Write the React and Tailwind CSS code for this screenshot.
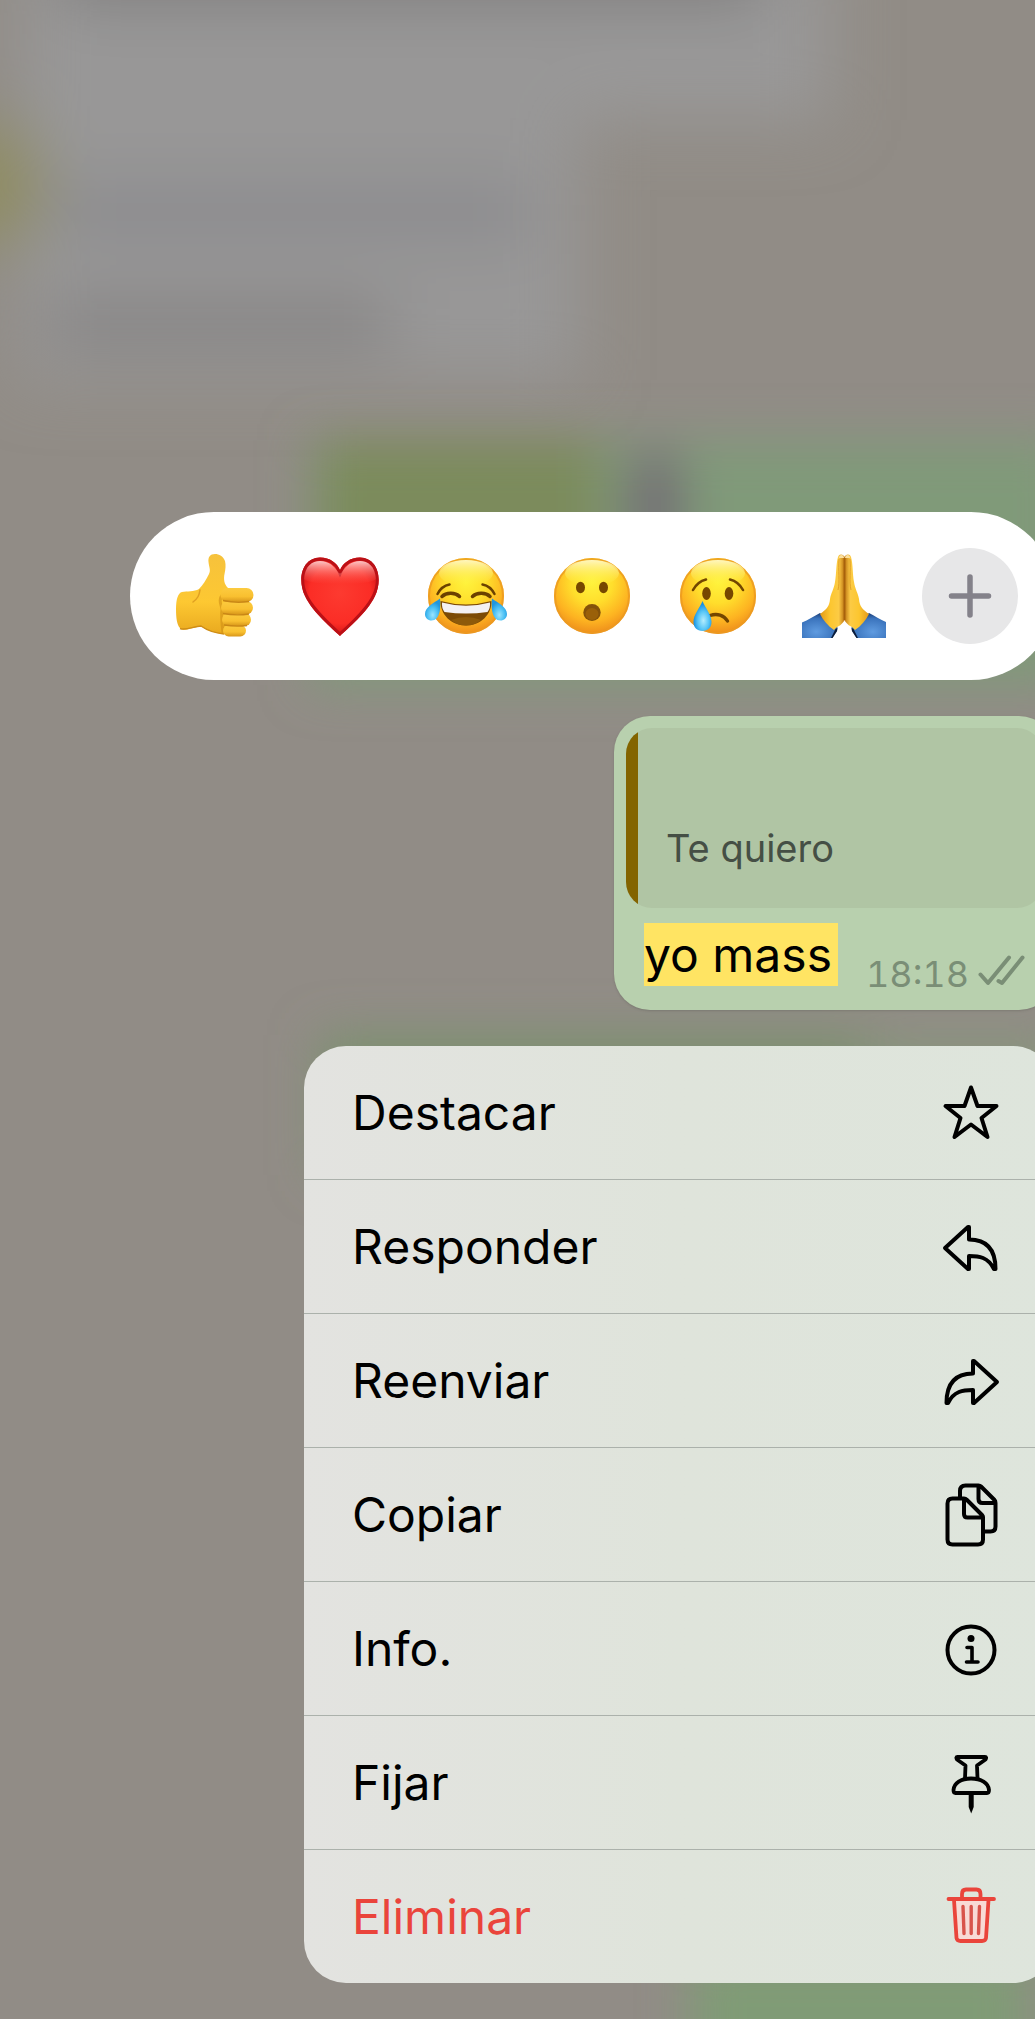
import React from 'react';

function Backdrop() {
  return (
    <svg
      aria-hidden="true"
      className="absolute inset-0 w-full h-full"
      viewBox="0 0 1035 2019"
      preserveAspectRatio="xMidYMin slice"
    >
      <defs>
        <filter id="soft" x="-60%" y="-60%" width="220%" height="220%">
          <feGaussianBlur stdDeviation="32" />
        </filter>
        <filter id="tight" x="-60%" y="-60%" width="220%" height="220%">
          <feGaussianBlur stdDeviation="24" />
        </filter>
      </defs>
      <g filter="url(#soft)">
        <rect x="20" y="-60" width="810" height="180" fill="#999898" />
        <rect x="20" y="60" width="560" height="320" fill="#989797" />
        <rect x="60" y="-60" width="700" height="64" fill="#7f7e7e" />
        <rect x="60" y="190" width="470" height="44" fill="#87878b" />
        <rect x="50" y="300" width="340" height="46" fill="#838181" />
        <ellipse cx="-10" cy="185" rx="55" ry="65" fill="#8f8c60" />
      </g>
      <g filter="url(#tight)">
        <rect x="310" y="440" width="760" height="245" fill="#809a79" />
        <rect x="320" y="440" width="280" height="160" fill="#7b8b5c" />
        <rect x="625" y="450" width="60" height="110" rx="30" fill="#746f74" />
        <rect x="320" y="1035" width="560" height="140" fill="#7b916e" />
        <rect x="860" y="1040" width="200" height="140" fill="#87957c" />
        <rect x="690" y="1950" width="340" height="140" fill="#809b76" />
      </g>
    </svg>
  );
}

function ThumbsUp() {
  return (
    <svg viewBox="0 0 84 84" className="w-[84px] h-[84px]" aria-hidden="true">
      <defs>
        <linearGradient id="thumbSkin" x1="0" y1="0" x2="0" y2="1">
          <stop offset="0" stopColor="#f6c23c" />
          <stop offset="0.6" stopColor="#fdc832" />
          <stop offset="1" stopColor="#e9a91f" />
        </linearGradient>
        <linearGradient id="fingerSkin" x1="0" y1="0" x2="0" y2="1">
          <stop offset="0" stopColor="#fccb40" />
          <stop offset="0.6" stopColor="#f9c030" />
          <stop offset="1" stopColor="#d8961a" />
        </linearGradient>
      </defs>
      <path
        d="M43 0C38 0 36 3 36.500 8C37 13 39 16 37 20C34 26 31 31 27 35C22 38 15 37 10 38C6 39 4 45 4 55C4 64 5 71 8 74C10 76.500 14 76 19 74.500L29 72C33 75 40 79 52 80L60 60L56 34C52 30 51.500 25 52.500 20C53.500 15 54 11 53 7C51.500 2.500 47 0 43 0Z"
        fill="url(#thumbSkin)"
      />
      <path d="M28 36C27 42 26 44 21 48" fill="none" stroke="#e0a022" strokeWidth="1.500" strokeLinecap="round" />
      <path d="M8 74.500C14 77 22 72 29 72C36 77 42 79 52 80" fill="none" stroke="#cf8d16" strokeWidth="1.500" />
      <path d="M51 40C46 46 49 50 50 55C49 62 50 70 51 79" fill="none" stroke="#cf8d16" strokeWidth="3" opacity="0.600" />
      <rect x="51" y="71" width="23" height="11.500" rx="5.700" fill="url(#fingerSkin)" />
      <rect x="50" y="59.500" width="29" height="12.500" rx="6.200" fill="url(#fingerSkin)" />
      <rect x="49" y="47" width="32" height="13.500" rx="6.700" fill="url(#fingerSkin)" />
      <rect x="48.500" y="34" width="33" height="14" rx="7" fill="url(#fingerSkin)" />
      <path d="M51 46.500Q64 49.500 77 47.500M51 59.500Q64 62 77 60M52 71Q64 73 75 71.500" fill="none" stroke="#c98716" strokeWidth="1.300" />
    </svg>
  );
}

function Heart() {
  const shape =
    'M42 82C35 75 15 59 7 42C-1 25 4 4 22 3.500C32 3.500 39 9 42 16C45 9 52 3.500 62 3.500C80 4 85 25 77 42C69 59 49 75 42 82Z';
  return (
    <svg viewBox="0 0 84 84" className="w-[84px] h-[84px]" aria-hidden="true">
      <defs>
        <radialGradient id="heartFill" cx="0.5" cy="0.45" r="0.6">
          <stop offset="0" stopColor="#fd3a30" />
          <stop offset="0.65" stopColor="#fb2d26" />
          <stop offset="0.85" stopColor="#dd1a1a" />
          <stop offset="1" stopColor="#a50b10" />
        </radialGradient>
        <linearGradient id="heartShine" x1="0" y1="0" x2="0" y2="1">
          <stop offset="0" stopColor="#ffd9d9" stopOpacity="0.9" />
          <stop offset="1" stopColor="#ff5a50" stopOpacity="0" />
        </linearGradient>
        <clipPath id="heartClip">
          <path d={shape} />
        </clipPath>
      </defs>
      <path d={shape} fill="url(#heartFill)" />
      <g clipPath="url(#heartClip)">
        <path d={shape} fill="none" stroke="#bb1016" strokeWidth="6" />
      </g>
      <path d="M6 25C7 12 14 7 22 7C31 7 36 12 40 18Q42 21 44 18C48 12 53 7 62 7C70 7 77 12 78 25C72 32 12 32 6 25Z" fill="url(#heartShine)" />
    </svg>
  );
}

function FaceBase({ id }) {
  return (
    <>
      <defs>
        <radialGradient id={id + 'Base'} cx="0.5" cy="0.32" r="0.68">
          <stop offset="0" stopColor="#fff33c" />
          <stop offset="0.4" stopColor="#ffde2c" />
          <stop offset="0.75" stopColor="#fdb321" />
          <stop offset="1" stopColor="#ee8d1b" />
        </radialGradient>
        <linearGradient id={id + 'Shine'} x1="0" y1="0" x2="0" y2="1">
          <stop offset="0" stopColor="#fff6c0" />
          <stop offset="1" stopColor="#fff23e" stopOpacity="0" />
        </linearGradient>
      </defs>
      <circle cx="42" cy="42" r="38" fill={'url(#' + id + 'Base)'} />
      <circle cx="42" cy="42" r="37" fill="none" stroke="#eb9a20" strokeWidth="2" opacity="0.800" />
      <ellipse cx="42" cy="19" rx="27" ry="13" fill={'url(#' + id + 'Shine)'} />
    </>
  );
}

function Joy() {
  return (
    <svg viewBox="0 0 84 84" className="w-[84px] h-[84px]" aria-hidden="true">
      <defs>
        <radialGradient id="joyTear" cx="0.5" cy="0.75" r="0.6">
          <stop offset="0" stopColor="#9be4fd" />
          <stop offset="0.6" stopColor="#46bdf3" />
          <stop offset="1" stopColor="#2196dd" />
        </radialGradient>
      </defs>
      <FaceBase id="joy" />
      <g fill="none" stroke="#6b4100" strokeLinecap="round">
        <path d="M13.500 40C16 35 20 31.500 25.500 30.500M70.500 40C68 35 64 31.500 58.500 30.500" strokeWidth="2.500" />
        <path d="M18 42.500C22 38.500 31 38 35.500 42.500M48.500 42.500C53 38 62 38.500 66 42.500" strokeWidth="3.500" />
      </g>
      <path d="M16.500 47Q42 54 67.500 47C68 60 57 71.500 42 71.500C27 71.500 16 60 16.500 47Z" fill="#7c4a05" />
      <path d="M18 48.500Q42 55 66 48.500Q66.500 54 63.500 58Q42 61 20.500 58Q17.500 54 18 48.500Z" fill="#f3f1f4" />
      <path d="M27 66Q42 60 57 66Q51 71.500 42 71.500Q33 71.500 27 66Z" fill="#8d5a0a" />
      <path d="M16 44.500C10 49 1 53 1 60C1 64 4 66.500 7.500 66.500C16 66.500 17 54 16 44.500Z" fill="url(#joyTear)" />
      <path d="M68 44.500C74 49 83 53 83 60C83 64 80 66.500 76.500 66.500C68 66.500 67 54 68 44.500Z" fill="url(#joyTear)" />
    </svg>
  );
}

function Surprised() {
  return (
    <svg viewBox="0 0 84 84" className="w-[84px] h-[84px]" aria-hidden="true">
      <FaceBase id="wow" />
      <ellipse cx="30.500" cy="33.500" rx="4.500" ry="5.700" fill="#764800" />
      <ellipse cx="53.500" cy="33.500" rx="4.500" ry="5.700" fill="#764800" />
      <ellipse cx="42" cy="58.500" rx="8.700" ry="8.500" fill="#84520a" />
      <ellipse cx="42" cy="60" rx="6.500" ry="6" fill="#9a6009" />
    </svg>
  );
}

function Crying() {
  return (
    <svg viewBox="0 0 84 84" className="w-[84px] h-[84px]" aria-hidden="true">
      <defs>
        <radialGradient id="cryTear" cx="0.55" cy="0.65" r="0.55">
          <stop offset="0" stopColor="#b4ecfd" />
          <stop offset="0.55" stopColor="#58c6f7" />
          <stop offset="1" stopColor="#168fe0" />
        </radialGradient>
      </defs>
      <FaceBase id="cry" />
      <g fill="none" stroke="#734600" strokeLinecap="round">
        <path d="M17 36C20 30.500 24 27 30 25.500M67 36C64 30.500 60 27 54 25.500" strokeWidth="2.600" />
        <path d="M34 61.500C41 59 48 61 51.500 67" strokeWidth="3.400" />
      </g>
      <ellipse cx="30.500" cy="39.500" rx="4.300" ry="6.500" fill="#764800" />
      <ellipse cx="53" cy="39.500" rx="4.300" ry="6.500" fill="#764800" />
      <path d="M26.500 47C24 54 17.500 60 17.500 68C17.500 73.500 21 77 26.500 77C32 77 35.500 73.500 35.500 68C35.500 60 29 54 26.500 47Z" fill="url(#cryTear)" />
    </svg>
  );
}

function Praying() {
  return (
    <svg viewBox="0 0 84 84" className="w-[84px] h-[84px]" aria-hidden="true">
      <defs>
        <linearGradient id="handSkin" x1="0" y1="0" x2="1" y2="0">
          <stop offset="0" stopColor="#e2991a" />
          <stop offset="0.4" stopColor="#fcc62f" />
          <stop offset="0.75" stopColor="#fccb45" />
          <stop offset="1" stopColor="#b96f10" />
        </linearGradient>
        <radialGradient id="sleeve" cx="0.4" cy="0.75" r="0.75">
          <stop offset="0" stopColor="#5f9be0" />
          <stop offset="0.7" stopColor="#3b74bd" />
          <stop offset="1" stopColor="#1c3f78" />
        </radialGradient>
        <g id="prayHalf">
          <path d="M0 68.500C6 66 12 62 18 59L35.500 73L35 77L30.500 84H0Z" fill="url(#sleeve)" />
          <path d="M35.500 74L35 77L30.500 84H29L33.500 75Z" fill="#0c1c38" />
          <path d="M43 4C42 0 37 -1 36 3C34 10 34.500 20 33 28C32 35 29 39 28 45C27.500 52 25 55 18 60C21 66 26 72 32 76C34 73 38 72 40 69.500C42 67.500 43 66 43 64Z" fill="url(#handSkin)" />
          <path d="M37 5C36 16 38 28 36 36" fill="none" stroke="#e3a227" strokeWidth="1" />
          <path d="M37 4Q37 1 39.500 1Q41.500 1 42 4Z" fill="#fbe0a0" />
        </g>
      </defs>
      <use href="#prayHalf" />
      <use href="#prayHalf" transform="translate(85 0) scale(-1 1)" />
      <path d="M42.500 4V66" stroke="#a8620c" strokeWidth="1.800" />
    </svg>
  );
}

const reactions = [
  { label: 'Me gusta', Icon: ThumbsUp },
  { label: 'Me encanta', Icon: Heart },
  { label: 'Risa', Icon: Joy },
  { label: 'Sorpresa', Icon: Surprised },
  { label: 'Tristeza', Icon: Crying },
  { label: 'Gracias', Icon: Praying },
];

function MenuIcon({ children }) {
  return (
    <svg
      viewBox="0 0 64 64"
      className="w-16 h-16 shrink-0"
      fill="none"
      stroke="currentColor"
      strokeWidth="4"
      strokeLinecap="round"
      strokeLinejoin="round"
      aria-hidden="true"
    >
      {children}
    </svg>
  );
}

const menuItems = [
  {
    label: 'Destacar',
    icon: <path d="M32 6.500L38.500 25H57.500L42.500 37L48.500 56L32 43.500L15.500 56L21.500 37L6.500 25H25.500Z" />,
  },
  {
    label: 'Responder',
    icon: <path d="M30 12H29L6 33L29 54H30V41C40 41 49 42 55 54H56.500C56.500 36 49 24.500 30 24.500Z" />,
  },
  {
    label: 'Reenviar',
    icon: <path d="M34 12H35L58 33L35 54H34V41C24 41 15 42 9 54H7.500C7.500 36 15 24.500 34 24.500Z" />,
  },
  {
    label: 'Copiar',
    icon: (
      <>
        <path d="M25 15.500H13.500Q8.500 15.500 8.500 20.500V56.500Q8.500 61.500 13.500 61.500H39Q44 61.500 44 56.500V34Q44 33 43 32L28 17Q26.500 15.500 25 15.500V31Q25 34.500 28.500 34.500H44" />
        <path d="M21 15V8Q21 2.500 26.500 2.500H39.500V16Q39.500 20 43.500 20H56.500V43.500Q56.500 48.500 51.500 48.500H45M39.500 2.500Q41 2.500 42 3.500L55.500 17Q56.500 18 56.500 20" />
      </>
    ),
  },
  {
    label: 'Info.',
    icon: (
      <>
        <circle cx="32" cy="33" r="23.500" />
        <circle cx="32" cy="21.500" r="3.500" fill="currentColor" stroke="none" />
        <path d="M28 30.500H33V45M27.500 45H39" strokeWidth="3.600" />
      </>
    ),
  },
  {
    label: 'Fijar',
    icon: (
      <>
        <path d="M26 27.500L26.500 14.500L18 8.500Q16.500 6 18.500 6H46Q48 6 46.500 8.500L38 14.500L38.500 27.500" strokeWidth="3.800" />
        <path d="M14.500 39C15 32 22 27.500 32 27.500C42 27.500 49.500 32 50 39Q50 42 48 42H16.500Q14.500 42 14.500 39Z" strokeWidth="3.800" />
        <path d="M29.700 42H34.700V56L32.200 62.500L29.700 56Z" fill="currentColor" stroke="none" />
      </>
    ),
  },
  {
    label: 'Eliminar',
    danger: true,
    icon: (
      <>
        <path d="M15 15L17.500 53Q18 57 21.500 57H43Q46.500 57 47 53L49.500 15Z" fill="#f8dad5" stroke="none" />
        <path d="M9.500 14H55M15 15L17.500 53Q18 56 21.500 56H43Q46.500 56 47 53L49.500 15" strokeWidth="3.800" />
        <path d="M23 13V9Q23 4.500 27 4.500H37.500Q41.500 4.500 41.500 9V13" strokeWidth="3.800" />
        <path d="M24 21.500L25 48.500M32.200 21.500V48.500M40.500 21.500L39.500 48.500" strokeWidth="3.400" stroke="#d8544b" />
      </>
    ),
  },
];

function ReactionBar() {
  return (
    <div className="w-[925px] shrink-0 h-[168px] pl-[21px] flex items-center bg-white rounded-full">
      {reactions.map(({ label, Icon }) => (
        <button key={label} type="button" aria-label={label} className="w-[126px] flex justify-center">
          <Icon />
        </button>
      ))}
      <button type="button" aria-label="Más reacciones" className="w-[126px] flex justify-center">
        <span className="w-24 h-24 rounded-full bg-[#e7e7e8] flex items-center justify-center">
          <svg viewBox="0 0 44 44" className="w-11 h-11" stroke="#84828a" strokeWidth="5.500" strokeLinecap="round" aria-hidden="true">
            <path d="M22 3V41M3.500 22H40.500" />
          </svg>
        </span>
      </button>
    </div>
  );
}

function MessageBubble() {
  return (
    <div className="w-[441px] p-3 pb-6 rounded-[36px] bg-[#b8d0ae] shadow-sm">
      <blockquote className="h-[180px] flex rounded-[26px] overflow-hidden bg-[#b0c5a4]">
        <div className="w-3 bg-[#836400]" />
        <p className="self-end pl-7 pb-9 text-[38px] leading-[48px] text-[#454f45]">Te quiero</p>
      </blockquote>
      <div className="mt-[15px] pl-[18px] pr-[18px] flex items-end">
        <p className="text-[48px] leading-[63px] text-black">
          <mark className="block pr-1.5 bg-[#ffe463] text-black">yo mass</mark>
        </p>
        <div className="ml-auto flex items-end gap-2 text-[#7a8e76]">
          <time className="text-[36px] leading-[40px] -mb-2 tabular-nums">18:18</time>
          <svg
            viewBox="0 0 48 32"
            className="w-12 h-8"
            fill="none"
            stroke="currentColor"
            strokeWidth="4"
            strokeLinecap="round"
            strokeLinejoin="round"
            aria-hidden="true"
          >
            <path d="M3.500 20.500L11 29L32 3.500M21.500 27L25 29L45.500 3.500" />
          </svg>
        </div>
      </div>
    </div>
  );
}

function ContextMenu() {
  return (
    <ul className="w-[751px] rounded-[42px] overflow-hidden divide-y divide-[#abb1ab] bg-gradient-to-r from-[#e3e3e0] via-[#dfe4db] to-[#dee5dc]">
      {menuItems.map((item) => (
        <li key={item.label}>
          <button
            type="button"
            className={`w-full h-[133px] pl-12 pr-[52px] flex items-center justify-between text-[48px] leading-[60px] ${
              item.danger ? 'text-[#ea443b]' : 'text-black'
            }`}
          >
            {item.label}
            <MenuIcon>{item.icon}</MenuIcon>
          </button>
        </li>
      ))}
    </ul>
  );
}

export default function App() {
  return (
    <main className="relative min-h-screen overflow-hidden bg-[#918c86] font-[Inter,sans-serif]">
      <Backdrop />
      <div className="relative -mr-5 pt-[512px] pb-9 flex flex-col items-end gap-9">
        <ReactionBar />
        <MessageBubble />
        <ContextMenu />
      </div>
    </main>
  );
}
